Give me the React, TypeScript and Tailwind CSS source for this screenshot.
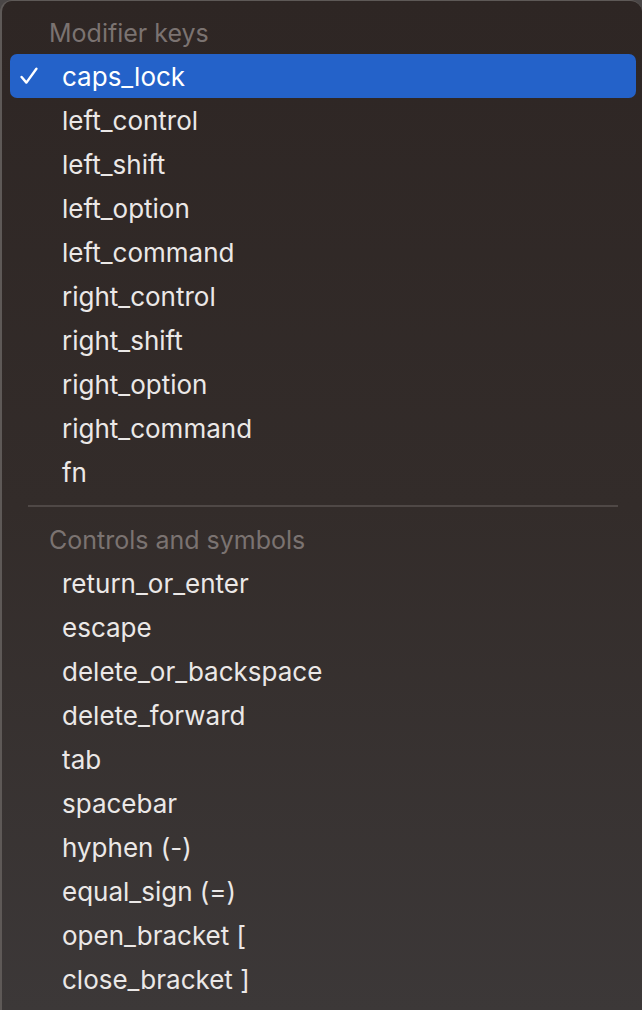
const modifierKeys = [
  'caps_lock',
  'left_control',
  'left_shift',
  'left_option',
  'left_command',
  'right_control',
  'right_shift',
  'right_option',
  'right_command',
  'fn',
];

const controlKeys = [
  'return_or_enter',
  'escape',
  'delete_or_backspace',
  'delete_forward',
  'tab',
  'spacebar',
  'hyphen (-)',
  'equal_sign (=)',
  'open_bracket [',
  'close_bracket ]',
];

function Header({ label }: { label: string }) {
  return (
    <div className="flex h-[44px] items-center pl-[39px] pt-[3px] text-[25px] text-[#7b7371]">
      {label}
    </div>
  );
}

function Item({ label, selected }: { label: string; selected?: boolean }) {
  return (
    <div
      className={
        selected
          ? 'flex h-[44px] items-center rounded-[7px] bg-[#2462c9] text-white'
          : 'flex h-[44px] items-center text-[#ebe8e7]'
      }
    >
      <span className="flex w-[52px] items-center pl-[10px]">
        {selected && (
          <svg width="18" height="18" viewBox="0 0 18 18" fill="none">
            <path
              d="M1.6 10 L6.4 15.6 L16.4 1.8"
              stroke="white"
              strokeWidth="2.4"
              strokeLinecap="round"
              strokeLinejoin="round"
            />
          </svg>
        )}
      </span>
      <span className="pt-[2px] text-[26px] leading-none">{label}</span>
    </div>
  );
}

export default function App() {
  return (
    <div
      className="h-[1010px] w-[642px] overflow-hidden bg-[#4a4646]"
      style={{ fontFamily: 'Inter, "Noto Sans", sans-serif' }}
    >
      <div className="h-[1010px] rounded-t-[12px] border-l-2 border-t border-[#5e5957] bg-gradient-to-b from-[#2e2624] via-[#332c2a] to-[#3c3838] pl-[8px] pr-[6px] pt-[9px]">
        <Header label="Modifier keys" />
        {modifierKeys.map((k, i) => (
          <Item key={k} label={k} selected={i === 0} />
        ))}
        <div className="flex h-[23px] items-center pl-[18px] pr-[18px]">
          <div className="h-[2px] w-full bg-[#4f4846]" />
        </div>
        <Header label="Controls and symbols" />
        {controlKeys.map((k) => (
          <Item key={k} label={k} />
        ))}
      </div>
    </div>
  );
}
